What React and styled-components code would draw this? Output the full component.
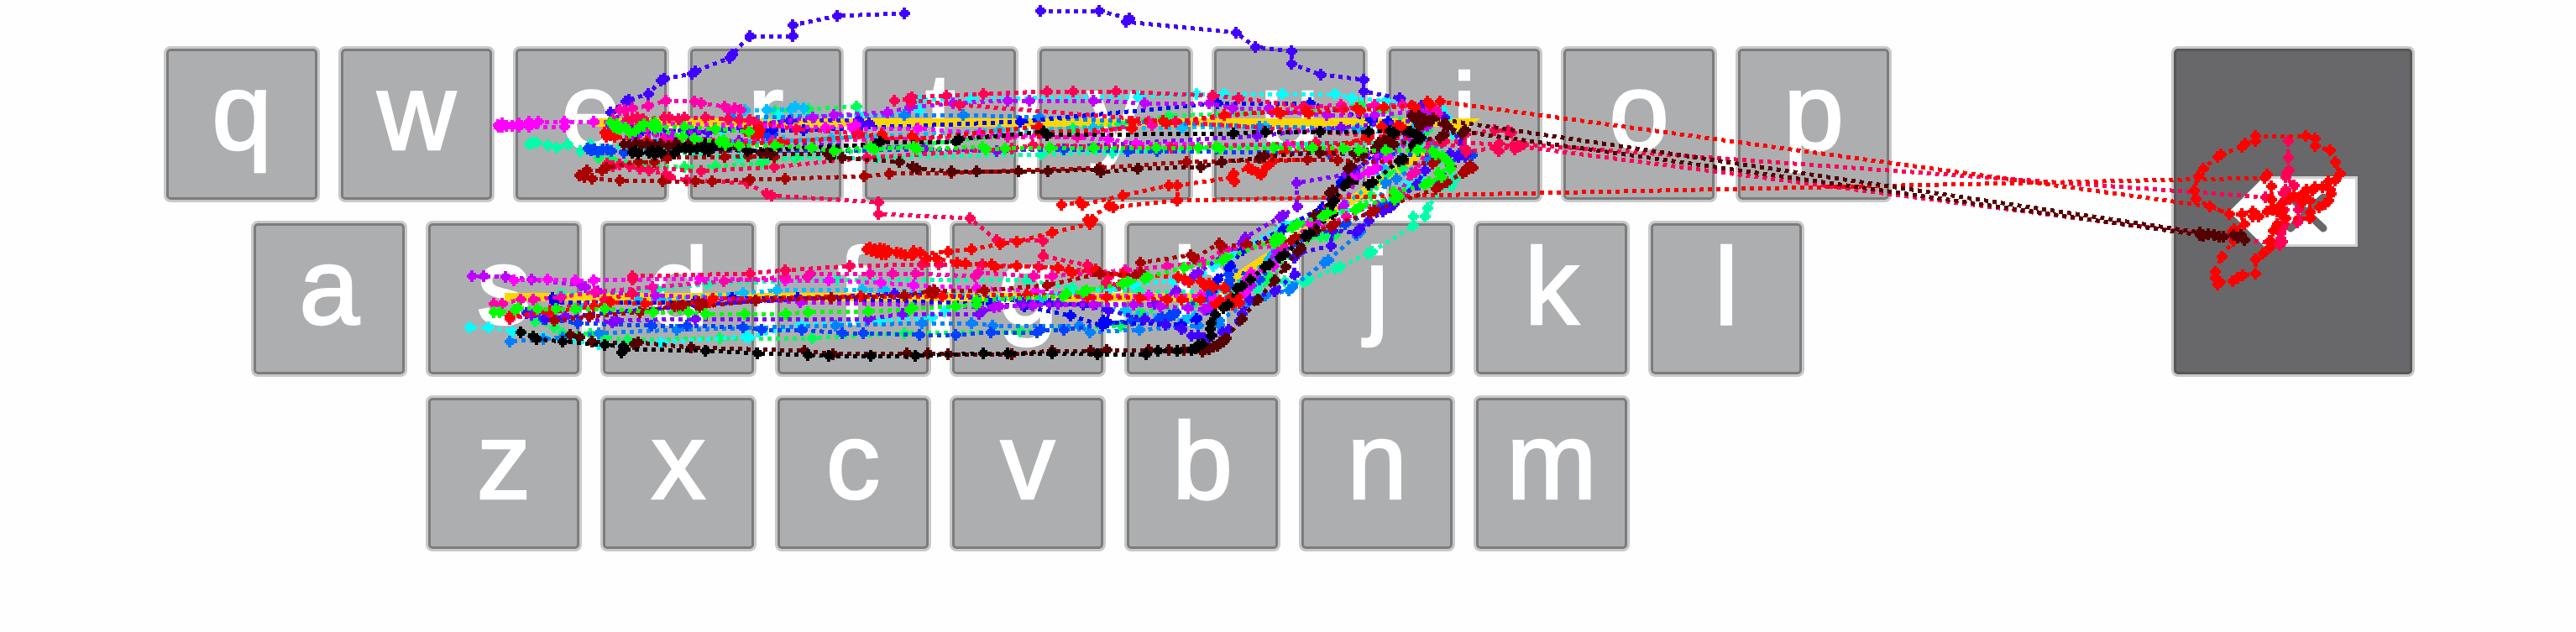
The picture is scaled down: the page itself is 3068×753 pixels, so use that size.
import React from "react";
import styled, { createGlobalStyle } from "styled-components";

const GlobalStyle = createGlobalStyle`
  html, body { margin: 0; padding: 0; background: #fefefe; }
`;

const Page = styled.main`
  position: relative;
  box-sizing: border-box;
  width: 3068px;
  height: 753px;
  padding: 55px 0 0 195px;
  display: flex;
  align-items: flex-start;
  gap: 337px;
  overflow: hidden;
  background: #fefefe;
  font-family: "Liberation Sans", Arial, sans-serif;
`;

const Keyboard = styled.div`
  display: flex;
  flex-direction: column;
  gap: 22px;
  width: 2054px;
`;

const Row = styled.div`
  display: flex;
  gap: 22px;
  padding-left: ${(p) => p.$indent}px;
`;

const KeyCap = styled.div`
  box-sizing: border-box;
  flex: none;
  width: 186px;
  height: 186px;
  border: 3px solid #c9c9c9;
  border-radius: 8px;
  box-shadow: inset 0 0 0 3px #7c7c7d;
  background: #adaeb0;
  display: flex;
  align-items: center;
  justify-content: center;
  padding-bottom: 31px;
  color: #fff;
  font-size: 129px;
  line-height: 150px;
  -webkit-text-stroke: 2.5px #fff;
`;

const DeleteKey = styled(KeyCap)`
  width: 290px;
  height: 394px;
  padding: 0;
  background: #68686a;
  box-shadow: inset 0 0 0 3px #575758;
`;

const DeleteIcon = styled.svg`
  display: block;
  width: 153px;
  height: 84px;
`;

const TraceLayer = styled.svg`
  position: absolute;
  inset: 0;
  width: 3068px;
  height: 753px;
  pointer-events: none;
`;

const ROWS = [
  { indent: 0, keys: "qwertyuiop" },
  { indent: 104, keys: "asdfghjkl" },
  { indent: 312, keys: "zxcvbnm" },
];

// Each gesture is drawn as dotted segments with a cross at every sample.
const TRACES = [
  { color: "#00ff55", paths: [
    "923,132 963,130 1020,127",
    "713,188 727,189 767,197 815,199 852,198 905,195 910,193 947,188 1278,153 1333,148 1392,138 1560,132 1620,125 1647,132 1700,155 1690,168 1670,200 1652,207 1633,233 1590,280 1580,281 1573,282 1557,284 1512,330 1506,335 1487,340 1460,347 1420,363 1358,372 1335,388 1215,395 1077,397 967,403 857,403 747,405 720,402 703,398 670,397 660,390 637,383",
  ]},
  { color: "#00ffaa", paths: [
    "630,172 634,170 639,170 652,173 663,176 676,172 691,180 703,172 880,188 1043,188 1240,184 1325,182 1532,172 1690,170 1733,213 1728,222 1720,220 1700,248 1697,258 1683,258 1683,269 1634,300 1629,302 1596,318 1590,320 1557,334 1552,336 1530,335 1498,338 1497,345 1460,347 1357,347 1277,343 1223,334 997,333 842,338 783,345 668,350",
  ]},
  { color: "#00ffff", paths: [
    "860,155 927,138 1023,137 1095,131 1090,119 1097,119 1157,118 1355,115 1425,112 1458,112 1527,112 1590,112 1610,117 1650,120 1717,130 1723,140 1730,160 1690,212 1677,220 1673,221 1657,240 1600,252 1530,267 1470,302 1445,317 1430,327 1397,335 1350,339 1320,345 1187,357 1125,371 1110,378 1050,382 953,387 892,402 888,401 787,408 713,410 647,402 610,395 582,390 559,390",
  ]},
  { color: "#00bfff", paths: [
    "870,137 887,131 913,131 942,130 947,127 957,129",
    "780,170 933,168 990,165 1190,155 1302,152 1408,152 1507,151 1617,153 1683,153 1647,200 1633,220 1600,245 1515,303 1511,309 1483,333 1450,343 1423,377 1415,379 1410,382 1340,370 1238,358 1053,345 1027,345 925,346 885,349 787,357 760,358 690,365",
  ]},
  { color: "#0080ff", paths: [
    "870,140 1077,137 1147,137 1238,140 1500,151 1597,153 1690,160 1707,173 1700,190 1663,213 1650,218 1640,245 1620,276 1616,280 1582,310 1577,313 1539,342 1535,346 1507,352 1487,360 1452,382 1452,387 1427,388 1357,393 1298,396 1285,388 1182,388 1157,385 1098,385 995,388 806,393 713,397 670,402 647,404 607,407",
  ]},
  { color: "#0040ff", paths: [
    "902,161 908,159 914,161 920,160",
    "700,177 704,179 708,178 712,181 718,178 723,178 728,180 743,182 755,180 805,180 1267,178 1343,180 1378,180 1583,183 1753,185 1745,187 1738,183 1713,217 1690,220 1647,245 1602,267 1540,290 1500,333 1463,319 1463,327 1464,334 1464,340 1443,347 1438,353 1400,372 1398,375 1393,376 1391,379 1384,378 1380,380 1348,382 1267,393 1239,393 1235,396 1180,396 1138,399 1095,399 1028,397 1003,397 955,393 907,393 885,390 818,388 776,388 688,385 647,380",
  ]},
  { color: "#0000ff", paths: [
    "760,160 820,155 920,155 957,155 1215,145 1450,123 1560,123 1633,143 1653,145 1673,157 1640,180 1613,205 1597,217 1575,247 1528,273 1480,298 1465,317 1450,333 1443,370 1425,380 1407,387 1319,384 1314,382 1313,388 1275,376 1220,365 1180,362 950,355 872,355 827,360 660,360 658,355",
  ]},
  { color: "#4000ff", paths: [
    "1077,16 997,19 944,30 944,43 893,43 872,65 869,69 828,85 824,88 791,94 787,96 772,112 749,119 745,121 727,134 750,152 830,157 843,157 940,144 1022,143 1026,148 1035,147",
    "1239,13 1309,13 1345,22 1341,26 1472,39 1495,56 1538,61 1538,76 1573,89 1624,95 1624,109 1667,117 1693,126 1720,140 1740,170 1745,185 1737,187 1727,183 1697,203 1687,220 1660,243 1656,247 1647,252 1630,263 1619,273 1615,277 1587,275 1585,293 1545,302 1541,307 1542,327 1518,347 1488,357 1479,374 1476,382 1463,393 1456,396 1440,403 1434,403 1427,400 1419,400 1407,392 1388,387 1363,380 1320,370 1290,363 1250,362 1215,358 1065,350 830,363 650,380 627,373",
  ]},
  { color: "#8000ff", paths: [
    "727,150 800,163 880,168 1100,177 1187,180 1497,162 1597,152 1690,143 1700,150 1640,187 1603,208 1544,218 1545,246 1528,257 1524,259 1483,283 1480,288 1427,325 1422,328 1400,347 1375,362 1260,362 1217,363 1170,370 1166,374 1075,374 1034,380 828,380 734,382 729,384 673,377 633,375",
  ]},
  { color: "#bf00ff", paths: [
    "750,163 800,160 968,140 993,137 1057,134 1083,128 1135,123 1200,120 1226,120 1302,120 1363,123 1440,123 1468,129 1511,129 1515,133 1580,137 1637,137 1690,133 1703,133 1700,150 1640,200 1617,210 1600,245 1567,267 1520,300 1490,340 1440,366 1434,369 1415,367 1382,365 1350,363 1302,363 1230,364 1190,365 1184,366 953,360 780,352 712,347 697,342 692,340 633,333 602,330 576,329 562,329",
  ]},
  { color: "#ff00ff", paths: [
    "672,151 618,151 610,150 603,150 598,147 594,151 598,151 593,149 618,147 630,151 641,145 630,145 672,145 707,145 983,152 1019,149 1015,153 1093,153 1167,159 1320,166 1353,171 1533,173 1653,187 1636,202 1630,205 1610,213 1560,265 1517,317 1490,325 1485,332 1483,348 1477,352 1447,357 1430,352 1368,352 1290,352 1233,347 1163,343 1088,340 1049,337 987,334 935,334 833,332 707,334 685,334 652,333 612,334",
  ]},
  { color: "#ff00aa", paths: [
    "730,142 738,131 744,131 753,129 772,126 793,120 827,121 835,123 863,127 868,131 875,129 882,131",
    "760,150 790,166 920,168 1200,163 1283,163 1368,145 1372,149 1552,128 1597,125 1599,130 1637,125 1670,125 1710,131 1712,135 1720,160 1700,178 1686,205 1681,208 1667,230 1603,258 1527,293 1460,297 1455,301 1432,313 1390,317 1340,322 1253,329 1231,329 1165,325 1161,329 1090,326 1063,326 1036,326 965,326 961,330 935,330 862,335 777,342 708,348 668,354 635,357 620,357 598,362 588,362",
  ]},
  { color: "#ff0055", paths: [
    "747,142 753,142 759,140 766,142 791,140 797,140 808,142 815,140 840,140 867,142 880,143 893,143 900,146 948,154 1023,159",
    "1065,120 1082,118 1085,122 1086,116 1127,114 1171,112 1247,109 1278,109 1329,109 1444,114 1475,117 1553,127 1600,130",
    "1084,119 1143,125 1400,145 1720,168 1807,174 2707,290",
    "723,195 730,198 738,196 750,198 762,201 773,203 793,208 798,211 818,215 890,218 913,231 919,233 1046,241 1046,255 1155,260 1187,286 1242,287 1242,305 1295,316 1317,337 1333,340",
    "750,198 835,204 922,199 1032,188 1205,177 1230,173 1395,176 1567,170 1717,170 1745,177 1746,181 1781,176 1785,180 1802,173 1804,178 1810,174 1814,172 2698,235 2722,228",
    "1745,160 1780,155 1796,156 1800,158 1785,171",
    "753,329 893,326 935,322 1012,317 1098,315 1118,315 1170,315 1237,318 1300,323 1320,330",
    "607,380 655,370 720,357 753,350 753,333",
    "2725,168 2725,188 2726,203 2723,206 2722,211 2732,221 2742,236 2738,240 2737,250 2737,261 2736,265",
    "2722,226 2721,232 2720,240 2720,250 2720,260 2720,267 2718,272 2716,278 2716,284 2718,288 2715,292",
  ]},
  { color: "#ff0000", paths: [
    "720,158 722,163 727,161 732,163 770,168 850,172 930,170 1050,160 1052,166 1086,162 1089,166 1237,151 1237,158 1348,153 1348,145 1385,144 1389,147 1458,137 1521,133 1525,135 1555,133 1559,135 1616,129 1620,132 1648,128 1681,126 1685,128 1700,121 1703,125 1715,121 2632,246 2655,255 2670,255 2683,252 2690,258 2707,250 2717,250",
    "888,156 896,159 900,156 903,161 905,155",
    "1032,297 1036,295 1038,299 1042,297 1044,301 1048,296 1050,303 1053,297 1055,303 1058,299 1068,301 1073,302 1078,304 1086,304 1088,299 1096,301 1104,308 1115,308 1140,313 1150,314 1181,315 1185,318 1211,317 1260,319 1273,322 1277,325 1305,321 1309,325 1337,327 1403,330 1411,333 1416,336 1430,335 1435,341 1440,338 1445,342 1458,343 1466,354 1474,354 1476,361 1468,363 1463,358 1472,358 1453,358 1448,363 1430,357 1407,357 1390,357 1357,355 1318,354 1295,354 1223,351 1122,353 1025,353 849,356 845,360 768,362 727,360 707,365 655,372 607,377",
    "1088,303 1129,300 1157,297 1191,291 1211,288 1253,277 1298,267 1301,262 1295,262 1321,245 1326,247 1402,239 2697,212 2700,208 2705,222 2705,238 2717,250 2712,267 2707,275 2703,287 2703,295 2695,302 2686,309 2686,326 2671,328 2665,331 2659,335",
    "1264,244 1286,241 1289,244 1337,233 1392,221 1402,221 1402,239",
    "1402,221 1466,212 1470,216 1469,207 1487,200 1491,202 1498,206 1502,208 1508,199 1516,192 1557,190 1587,181 1627,163 1645,151 1649,154 1664,150 1670,152",
    "1503,188 1530,180 1570,178 1630,164",
    "2641,339 2644,336 2638,331 2638,324 2646,306 2660,287 2661,273 2658,276 2673,267 2670,255 2683,258",
    "2655,255 2632,246 2615,237 2613,227 2618,210 2624,201 2641,187 2645,184 2670,175 2674,171 2686,168 2686,162 2746,162 2757,165 2757,174 2775,179 2781,193 2787,207 2781,215 2773,216 2775,226 2776,231 2773,239 2769,243 2762,247",
    "2766,223 2757,223 2754,227 2747,226 2743,230 2751,239 2742,241 2732,233 2727,237 2717,243 2717,250 2707,247 2700,252 2712,252 2722,260 2751,260 2751,253",
  ]},
  { color: "#aa0000", paths: [
    "660,382 702,377 762,372 803,365 808,365 813,364 832,360 837,362 833,366 900,358 990,355 1077,352 1107,347 1110,351 1113,346 1172,346 1247,340 1310,326 1352,328 1359,325 1358,313 1418,304 1422,308 1452,290 1454,294 1485,291 1517,287 1538,287 1543,283 1585,270 1589,267 1632,254 1637,251 1710,225 1714,222 1723,217 1742,206 1747,200 1751,197 1754,200 1746,204 1710,191 1706,195 1593,191 1557,190 1413,193 1310,200 1133,206 1059,207 1029,210 935,213 893,214 848,216 828,216 789,216 738,215 705,213 696,211 690,209 695,207 699,203 717,203 722,200 760,193 779,193 795,188 863,187 891,186 922,187",
  ]},
  { color: "#550000", paths: [
    "743,172 750,173 757,171 764,173 771,172 780,173 787,172 796,174 805,171 813,174 820,172 836,174 840,171 845,178 849,173 858,176 867,175 906,182 913,182 918,184 985,183 989,187 1003,188 1071,193 1087,199 1092,201 1133,204 1163,204 1213,204 1248,204 1307,202 1311,205 1355,201 1430,199 1455,193 1500,188 1506,186 1572,182 1613,183 1638,176 1642,170 1648,168 1654,165 1661,160 1677,157 1690,150 1687,144 1681,138 1690,138 1697,142 1694,148 1702,144 1707,141 2620,277 2624,281 2630,279 2637,280 2643,282 2648,282 2660,280 2665,283 2669,280 2673,286",
    "1692,147 1720,147 1724,151 1741,159 1745,155 1719,161 1715,164 1660,172 1623,185 1609,198 1605,201 1607,217 1587,227 1583,230 1587,240 1565,257 1567,275 1549,296 1545,300 1531,318 1518,334 1498,357 1479,380 1460,403 1457,407 1453,408 1450,412 1445,413 1440,416 1434,415 1432,419 1410,417 1392,417 1368,417 1318,417 1299,418 1253,418 1205,422 1129,422 1105,421 1080,421 992,422 958,418 823,414 760,408 755,410 705,407 690,402 679,399",
    "1743,157 2620,280",
  ]},
  { color: "#000000", paths: [
    "753,182 757,180 760,183 773,182 777,180 780,184 784,180 788,182 803,183 808,178 816,176 822,178 830,177 840,173 846,173 839,178 844,180 849,176 890,180 1043,172 1048,169 1138,169 1142,166 1243,157 1247,161 1469,159 1507,157 1572,157 1630,157 1655,156 1660,158 1680,157 1686,161 1692,164 1688,169 1683,173 1671,190 1666,192 1635,217 1630,220 1606,216 1601,221 1589,239 1585,244 1587,255 1560,278 1554,281 1530,303 1524,307 1512,315 1506,318 1489,333 1479,341 1473,344 1463,363 1457,367 1447,375 1442,385 1441,392 1442,400 1432,410 1427,411 1424,415 1419,417 1402,418 1379,418 1365,422 1307,422 1253,421 1200,421 1171,421 1090,424 1037,424 987,424 962,423 902,421 840,418 743,416 740,420 742,413 720,411 670,407 639,404 635,401 620,396",
  ]},
  { color: "#00ff00", paths: [
    "727,146 731,151 735,148 739,153 745,152 750,158 757,156 762,151 767,148 776,149 780,146 783,151 815,151 852,154 892,157",
    "735,153 750,157 780,153 813,163 827,165 857,169 862,167 864,172 880,173 923,173 967,176 993,180 1037,175 1041,178 1088,175 1092,178 1170,175 1174,178 1197,177 1250,176 1302,176 1377,176 1427,176 1448,175 1453,177 1517,176 1563,176 1600,177 1618,179 1650,179 1688,179 1706,180 1710,184 1718,186 1722,190 1726,195 1727,201 1713,206 1717,211 1702,217 1697,220 1660,229 1664,233 1661,238 1666,234 1620,246 1614,250 1581,254 1576,257 1545,267 1539,271 1519,283 1523,287 1518,290 1525,284 1460,307 1456,310 1410,319 1367,330 1363,332 1343,336 1337,338 1294,346 1290,348 1270,350 1266,353 1163,358 1163,363 1138,365 1087,367 1083,369 1034,371 962,372 936,374 887,374 840,374 820,372 778,372 720,368 685,368 662,368 640,368 617,367 613,369 595,372 588,372",
  ]},
];

const crossesFor = (points) =>
  points
    .split(" ")
    .map((pair) => {
      const [x, y] = pair.split(",").map(Number);
      return `M${x - 6} ${y - 2}h2v-2h2v-3h4v3h3v2h2v4h-2v2h-3v3h-4v-3h-2v-2h-2z`;
    })
    .join("");

function Trace({ color, paths }) {
  return (
    <g>
      {paths.map((points, i) => (
        <g key={i}>
          <polyline points={points} fill="none" stroke={color} strokeWidth="5" strokeDasharray="5 5" />
          <path d={crossesFor(points)} fill={color} />
        </g>
      ))}
    </g>
  );
}

export default function App() {
  return (
    <>
      <GlobalStyle />
      <Page>
        <Keyboard>
          {ROWS.map((row) => (
            <Row key={row.keys} $indent={row.indent}>
              {row.keys.split("").map((letter) => (
                <KeyCap key={letter}>{letter}</KeyCap>
              ))}
            </Row>
          ))}
        </Keyboard>
        <DeleteKey aria-label="Delete">
          <DeleteIcon viewBox="0 0 153 84">
            <path d="M0 42L42 0H153V84H42Z" fill="#fff" />
            <path d="M42 1.5H151.5V82.5H42" fill="none" stroke="#d2d2d3" strokeWidth="3" />
            <path d="M73 62L112 25M73 25L112 62" stroke="#68686a" strokeWidth="9" strokeLinecap="round" />
          </DeleteIcon>
        </DeleteKey>
        <TraceLayer viewBox="0 0 3068 753" shapeRendering="crispEdges" aria-hidden="true">
          <polyline points="708,146 1747,146 1438,354 601,354" fill="none" stroke="#ffd700" strokeWidth="10" />
          {TRACES.map((trace) => (
            <Trace key={trace.color} {...trace} />
          ))}
        </TraceLayer>
      </Page>
    </>
  );
}
